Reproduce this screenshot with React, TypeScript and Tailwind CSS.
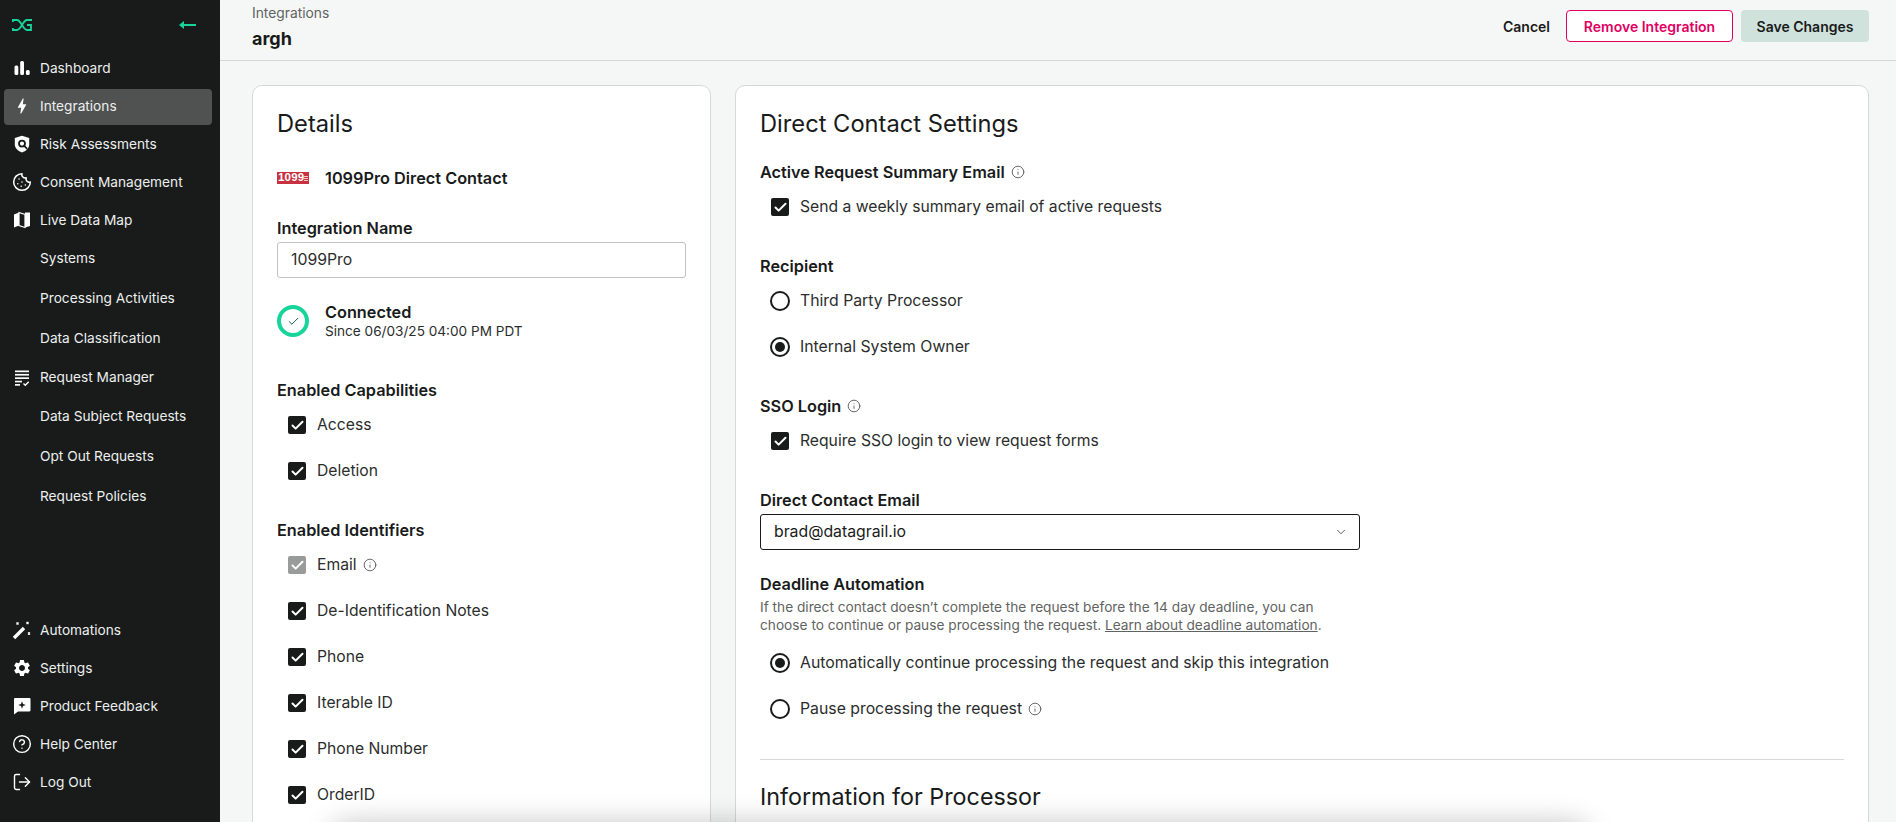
import { Check, ChevronDown, CircleHelp, Cookie, Info, LogOut } from "lucide-react";
import type { ReactNode } from "react";
import { MdBolt, MdSettings } from "react-icons/md";

const Bars = () => (
  <svg width="18" height="18" viewBox="0 0 18 18" fill="currentColor">
    <rect x="1.5" y="6.5" width="3.8" height="9.5" rx="1.5" />
    <rect x="7.2" y="2" width="3.8" height="14" rx="1.5" />
    <rect x="12.9" y="11" width="3.8" height="5" rx="1.5" />
  </svg>
);

const ShieldSearch = () => (
  <svg width="18" height="18" viewBox="0 0 18 18">
    <path d="M9 .8 16.2 3v6.2c0 4-3.2 6.8-7.2 8.2-4-1.4-7.2-4.2-7.2-8.2V3z" fill="currentColor" />
    <circle cx="9" cy="8.6" r="3" fill="none" stroke="#191b1b" strokeWidth="1.8" />
    <path d="m11.2 10.8 3 3" stroke="#191b1b" strokeWidth="1.8" />
  </svg>
);

const MapFold = () => (
  <svg width="18" height="18" viewBox="0 0 18 18" fill="currentColor">
    <path d="M1 3.5 6 1.5v13l-5 2z" />
    <path d="M12 1.5 17 1.5v13.5l-5 1.5z" />
    <path d="M6 1.5 12 3.5v13l-6-2z" fill="none" stroke="currentColor" strokeWidth="1.2" />
  </svg>
);

const RequestList = () => (
  <svg width="18" height="18" viewBox="0 0 18 18" fill="currentColor">
    <rect x="2" y="1.5" width="14" height="1.7" />
    <rect x="2" y="4.9" width="14" height="1.7" />
    <rect x="2" y="8.3" width="14" height="1.7" />
    <rect x="2" y="11.7" width="7" height="1.7" />
    <rect x="2" y="15" width="5" height="1.7" />
    <path d="m10.5 14.5 1.8 1.8 3.4-3.6" fill="none" stroke="currentColor" strokeWidth="1.4" />
  </svg>
);

const Wand = () => (
  <svg width="20" height="20" viewBox="0 0 20 20" fill="none" stroke="currentColor">
    <path d="m2 18 10-10" strokeWidth="3.4" />
    <path d="m4.5 2.5 2 2m0-2-2 2M14.5 2l2 2m0-2-2 2M16 12.5l2 2m0-2-2 2" strokeWidth="1.2" />
  </svg>
);

const Feedback = () => (
  <svg width="18" height="18" viewBox="0 0 18 18">
    <path d="M1 2.2C1 1.5 1.5 1 2.2 1h14.3c.6 0 1 .5 1 1.2v11c0 .7-.4 1.2-1 1.2H5L1 17.5z" fill="currentColor" />
    <path d="m9 4.2 1 2.8 2.8 1-2.8 1-1 2.8-1-2.8-2.8-1 2.8-1z" fill="#191b1b" />
  </svg>
);

type NavItem = { label: string; h: string; icon?: ReactNode; active?: boolean };

const TOP_NAV: NavItem[] = [
  { label: "Dashboard", h: "h-[38px]", icon: <Bars /> },
  { label: "Integrations", h: "h-[38px]", icon: <MdBolt size={20} />, active: true },
  { label: "Risk Assessments", h: "h-[38px]", icon: <ShieldSearch /> },
  { label: "Consent Management", h: "h-[38px]", icon: <Cookie size={20} strokeWidth={1.8} /> },
  { label: "Live Data Map", h: "h-[38px]", icon: <MapFold /> },
  { label: "Systems", h: "h-[39px]" },
  { label: "Processing Activities", h: "h-[40px]" },
  { label: "Data Classification", h: "h-[40px]" },
  { label: "Request Manager", h: "h-[39px]", icon: <RequestList /> },
  { label: "Data Subject Requests", h: "h-[39px]" },
  { label: "Opt Out Requests", h: "h-[40px]" },
  { label: "Request Policies", h: "h-[40px]" },
];

const BOTTOM_NAV: NavItem[] = [
  { label: "Automations", h: "h-[38px]", icon: <Wand /> },
  { label: "Settings", h: "h-[38px]", icon: <MdSettings size={20} /> },
  { label: "Product Feedback", h: "h-[38px]", icon: <Feedback /> },
  { label: "Help Center", h: "h-[38px]", icon: <CircleHelp size={20} strokeWidth={1.7} /> },
  { label: "Log Out", h: "h-[38px]", icon: <LogOut size={20} strokeWidth={1.7} /> },
];

function NavRow({ item }: { item: NavItem }) {
  return (
    <div className={`relative flex items-center pl-[40px] text-[13.7px] text-[#ecefee] ${item.h}`}>
      {item.active && <div className="absolute left-[4px] right-[8px] top-[2px] bottom-0 rounded-[4px] bg-[#505251]" />}
      {item.icon && (
        <span className="absolute left-[12px] top-1/2 flex w-[20px] -translate-y-1/2 justify-center text-white">
          {item.icon}
        </span>
      )}
      <span className="relative">{item.label}</span>
    </div>
  );
}

function Box({ disabled }: { disabled?: boolean }) {
  return (
    <span
      className={`flex size-[18px] shrink-0 items-center justify-center rounded-[2px] ${disabled ? "bg-[#999b9a]" : "bg-[#191b1b]"}`}
    >
      <Check size={15} strokeWidth={3.2} className="text-white" />
    </span>
  );
}

function CheckRow({ label, disabled, info }: { label: string; disabled?: boolean; info?: boolean }) {
  return (
    <div className="flex h-[46px] items-center gap-[11px] pl-[11px] text-[15.7px] text-[#2b2d2d]">
      <Box disabled={disabled} />
      <span>{label}</span>
      {info && <Info size={14} strokeWidth={1.5} className="-ml-[5px] text-[#555]" />}
    </div>
  );
}

function RadioRow({ label, on, info }: { label: string; on?: boolean; info?: boolean }) {
  return (
    <div className="flex h-[46px] items-center gap-[10px] pl-[10px] text-[15.8px] text-[#2b2d2d]">
      <span className="flex size-[20px] shrink-0 items-center justify-center rounded-full border-2 border-[#191b1b]">
        {on && <span className="size-[10px] rounded-full bg-[#191b1b]" />}
      </span>
      <span>{label}</span>
      {info && <Info size={14} strokeWidth={1.5} className="-ml-[4px] text-[#555]" />}
    </div>
  );
}

function Label({ children, className = "" }: { children: ReactNode; className?: string }) {
  return (
    <div className={`flex h-[24px] items-center gap-[6px] text-[16.3px] font-semibold leading-[22px] text-[#191b1b] ${className}`}>
      {children}
    </div>
  );
}

export default function App() {
  return (
    <div className="relative flex h-[822px] w-[1896px] overflow-hidden bg-[#f5f7f6] font-['Inter','Noto_Sans',sans-serif]">
      <aside className="flex w-[220px] shrink-0 flex-col justify-between bg-[#191b1b] pb-[21px]">
        <div>
          <div className="flex h-[49px] items-center justify-between pl-[12px] pr-[24px]">
            <svg width="20" height="12" viewBox="0 0 20 12" fill="none" stroke="#17d49a" strokeWidth="1.8">
              <path d="M0 1h5c4 0 6 10 10 10h4V6h-4" />
              <path d="M0 11h5c4 0 6-10 10-10h5" />
              <path d="M.9 1v2M.9 9v2" />
            </svg>
            <svg width="17" height="10" viewBox="0 0 17 10" fill="#17d49a">
              <path d="M0 5 5 1v3h12v2H5v3z" />
            </svg>
          </div>
          {TOP_NAV.map((item) => (
            <NavRow key={item.label} item={item} />
          ))}
        </div>
        <div>
          {BOTTOM_NAV.map((item) => (
            <NavRow key={item.label} item={item} />
          ))}
        </div>
      </aside>

      <main className="flex min-w-0 flex-1 flex-col">
        <header className="flex h-[61px] shrink-0 items-start justify-between border-b border-[#d5d9d8] pl-[32px] pr-[27px]">
          <div>
            <div className="mt-[3px] h-[20px] text-[13.8px] leading-[20px] text-[#5f6362]">Integrations</div>
            <div className="mt-[3px] text-[18px] font-bold leading-[26px] text-[#191b1b]">argh</div>
          </div>
          <div className="mt-[10px] flex items-center text-[14px] font-semibold">
            <span className="mr-[16px] text-[#191b1b]">Cancel</span>
            <span className="flex h-[32px] w-[167px] items-center justify-center rounded-[4px] border border-[#e0005f] bg-white text-[#e0005f]">
              Remove Integration
            </span>
            <span className="ml-[8px] flex h-[32px] w-[128px] items-center justify-center rounded-[4px] bg-[#d0e2dc] text-[#191b1b]">
              Save Changes
            </span>
          </div>
        </header>

        <div className="flex gap-[24px] pl-[32px] pr-[27px] pt-[24px]">
          <section className="h-[800px] w-[459px] shrink-0 rounded-[10px] border border-[#d5d9d8] bg-white px-[24px] pt-[22px]">
            <h2 className="text-[23.7px] font-normal leading-[32px] text-[#191b1b]">Details</h2>
            <div className="mt-[26px] flex h-[24px] items-center gap-[16px]">
              <span className="flex h-[12px] w-[32px] items-center justify-between overflow-hidden bg-[#c8313f] pl-[1px] pr-[1px]">
                <span className="font-['Liberation_Sans',sans-serif] text-[11.5px] font-bold leading-none tracking-[0.2px] text-white">1099</span>
                <span className="flex flex-col gap-[1px]">
                  <span className="h-[1px] w-[4px] bg-[#f3c9cd]" />
                  <span className="h-[1px] w-[4px] bg-[#f3c9cd]" />
                  <span className="h-[1px] w-[4px] bg-[#f3c9cd]" />
                </span>
              </span>
              <span className="text-[16.3px] font-semibold text-[#191b1b]">1099Pro Direct Contact</span>
            </div>
            <Label className="mt-[26px]">Integration Name</Label>
            <div className="mt-[2px] flex h-[36px] w-[409px] items-center rounded-[3px] border border-[#bfc3c2] px-[13px] text-[15.8px] text-[#2b2d2d]">
              1099Pro
            </div>
            <div className="mt-[24px] flex items-center gap-[16px]">
              <span className="flex size-[32px] items-center justify-center rounded-full border-[4px] border-[#17d49a]">
                <Check size={13} strokeWidth={1.8} className="text-[#1f5f4c]" />
              </span>
              <div>
                <div className="text-[16.3px] font-semibold leading-[20px] text-[#191b1b]">Connected</div>
                <div className="text-[13.6px] leading-[18px] text-[#2b2d2d]">Since 06/03/25 04:00 PM PDT</div>
              </div>
            </div>
            <Label className="mt-[38px]">Enabled Capabilities</Label>
            <CheckRow label="Access" />
            <CheckRow label="Deletion" />
            <Label className="mt-[24px]">Enabled Identifiers</Label>
            <CheckRow label="Email" disabled info />
            <CheckRow label="De-Identification Notes" />
            <CheckRow label="Phone" />
            <CheckRow label="Iterable ID" />
            <CheckRow label="Phone Number" />
            <CheckRow label="OrderID" />
          </section>

          <section className="h-[800px] min-w-0 flex-1 rounded-[10px] border border-[#d5d9d8] bg-white px-[24px] pt-[22px]">
            <h2 className="text-[23.7px] font-normal leading-[32px] text-[#191b1b]">Direct Contact Settings</h2>
            <Label className="mt-[20px]">
              Active Request Summary Email <Info size={14} strokeWidth={1.5} className="text-[#555]" />
            </Label>
            <CheckRow label="Send a weekly summary email of active requests" />
            <Label className="mt-[24px]">Recipient</Label>
            <RadioRow label="Third Party Processor" />
            <RadioRow label="Internal System Owner" on />
            <Label className="mt-[24px]">
              SSO Login <Info size={14} strokeWidth={1.5} className="text-[#555]" />
            </Label>
            <CheckRow label="Require SSO login to view request forms" />
            <Label className="mt-[24px]">Direct Contact Email</Label>
            <div className="mt-[2px] flex h-[36px] w-[600px] items-center justify-between rounded-[3px] border border-[#191b1b] pl-[13px] pr-[11px] text-[15.8px] text-[#191b1b]">
              <span>brad@datagrail.io</span>
              <ChevronDown size={14} strokeWidth={1.6} className="text-[#555]" />
            </div>
            <Label className="mt-[22px]">Deadline Automation</Label>
            <p className="mt-[2px] w-[600px] text-[13.7px] leading-[18px] text-[#5f6362]">
              If the direct contact doesn’t complete the request before the 14 day deadline, you can choose to continue or pause processing the request.{" "}
              <span className="underline">Learn about deadline automation</span>.
            </p>
            <div className="mt-[6px]">
              <RadioRow label="Automatically continue processing the request and skip this integration" on />
              <RadioRow label="Pause processing the request" info />
            </div>
            <div className="mt-[27px] border-t border-[#d5d9d8]" />
            <h2 className="mt-[21px] text-[23.3px] font-normal leading-[32px] text-[#191b1b]">Information for Processor</h2>
          </section>
        </div>
      </main>

      <div className="absolute bottom-[-40px] left-[330px] h-[40px] w-[1260px] rounded-[20px] bg-white shadow-[0_0_28px_rgba(0,0,0,0.22)]" />
    </div>
  );
}
